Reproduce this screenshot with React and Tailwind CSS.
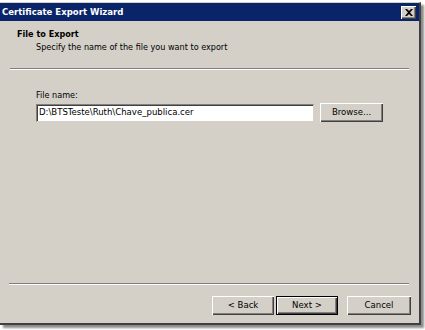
const font = "font-['DejaVu_Sans_Condensed','Liberation_Sans',sans-serif]";

function Button({ children, primary }) {
  return (
    <div
      className={`h-[19px] flex items-center justify-center text-[9.5px] text-black bg-[#d4d0c8] ${
        primary
          ? "border border-black shadow-[inset_1px_1px_0_#ffffff,inset_-1px_-1px_0_#404040,inset_-2px_-2px_0_#808080]"
          : "shadow-[inset_1px_1px_0_#ffffff,inset_-1px_-1px_0_#404040,inset_-2px_-2px_0_#808080]"
      }`}
    >
      {children}
    </div>
  );
}

function Separator({ className }) {
  return <div className={`h-[2px] border-t border-[#808080] border-b border-b-white ${className}`} />;
}

export default function App() {
  return (
    <div className={`w-[425px] h-[330px] bg-white pt-[2px] overflow-hidden ${font}`}>
      <div className="w-[421px] h-[323px] bg-[#d4d0c8] border-t border-t-[#d4d0c8] border-r-2 border-r-[#404040] border-b-2 border-b-[#404040] shadow-[3px_3px_2px_rgba(0,0,0,0.45)] flex flex-col">
        {/* title bar */}
        <div className="h-[18px] bg-[#0a246a] flex items-center justify-between pl-[2px] pr-[3px]">
          <span className="text-white font-bold text-[9.5px] leading-none">Certificate Export Wizard</span>
          <div className="w-[15px] h-[13px] bg-[#d4d0c8] shadow-[inset_1px_1px_0_#ffffff,inset_-1px_-1px_0_#404040,inset_-2px_-2px_0_#808080] flex items-center justify-center">
            <svg width="8" height="7" viewBox="0 0 8 7">
              <path d="M0 0h2l2 2 2-2h2L5 3.5 8 7H6L4 5 2 7H0l3-3.5z" fill="#000" />
            </svg>
          </div>
        </div>

        {/* header */}
        <div className="pl-[17px] pt-[8px] text-[9px] leading-[11px] text-black">
          <div className="font-bold">File to Export</div>
          <div className="pl-[19px] pt-[2px]">Specify the name of the file you want to export</div>
        </div>
        <Separator className="ml-[10px] mr-[10px] mt-[15px]" />

        {/* body */}
        <div className="pl-[36px] pt-[20px] flex-1">
          <div className="text-[9px] leading-[11px] text-black">File name:</div>
          <div className="flex items-center gap-[6px] mt-[2px]">
            <div className="w-[278px] h-[18px] bg-white border border-t-[#808080] border-l-[#808080] border-r-[#d4d0c8] border-b-[#d4d0c8] shadow-[inset_1px_1px_0_#404040] flex items-center pl-[2px] text-[9.5px] text-black">
              D:\BTSTeste\Ruth\Chave_publica.cer
            </div>
            <div className="w-[63px]">
              <Button>Browse...</Button>
            </div>
          </div>
        </div>

        <Separator className="ml-[9px] mr-[10px]" />
        <div className="flex justify-end pr-[8px] pt-[11px] pb-[8px]">
          <div className="w-[62px]">
            <Button>&lt; Back</Button>
          </div>
          <div className="w-[62px] ml-[2px]">
            <Button primary>Next &gt;</Button>
          </div>
          <div className="w-[64px] ml-[9px]">
            <Button>Cancel</Button>
          </div>
        </div>
      </div>
    </div>
  );
}
